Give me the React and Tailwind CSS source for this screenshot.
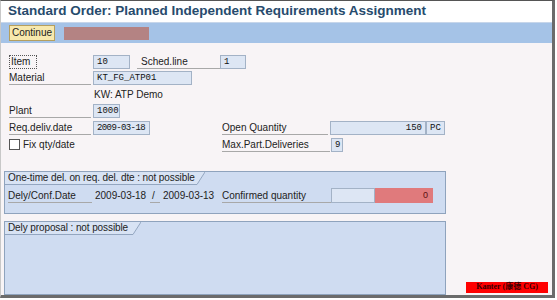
function Field({ w, children, right, className = '' }) {
  return (
    <div
      className={`h-[14px] whitespace-nowrap border border-[#a3b2c6] bg-[#dde6f4] px-[3px] font-['Liberation_Mono',monospace] text-[9px] leading-[12px] text-[#111] ${right ? 'text-right' : ''} ${className}`}
      style={{ width: w }}
    >
      {children}
    </div>
  )
}

function Label({ w, children, className = '' }) {
  return (
    <div
      className={`h-[14px] whitespace-nowrap border-b border-[#a8a8a8] text-[10px] leading-[13px] text-[#222] ${className}`}
      style={{ width: w }}
    >
      {children}
    </div>
  )
}

function GroupBox({ title, tabWidth, className = '', children }) {
  return (
    <div className={`ml-[3px] w-[442px] border border-[#8fa3bd] bg-[#cfdcf1] ${className}`}>
      <div className="flex h-[13px]">
        <div
          className="whitespace-nowrap border-b border-[#93a6c0] bg-[#d8e3f4] pl-[3px] text-[10px] leading-[12px] tracking-[-0.1px] text-[#222]"
          style={{ width: tabWidth }}
        >
          {title}
        </div>
        <svg width="8" height="13" viewBox="0 0 8 13">
          <path d="M0 0 L8 0 L0 13 Z" fill="#d8e3f4" />
          <path d="M8 0 L0 12.5" stroke="#93a6c0" strokeWidth="1" />
        </svg>
      </div>
      {children}
    </div>
  )
}

export default function App() {
  return (
    <div className="relative h-[300px] w-[557px] overflow-hidden bg-white font-['Liberation_Sans',sans-serif]">
      <div className="flex h-[298px] w-[555px] flex-col border-t border-r-[3px] border-b-[3px] border-l border-t-[#555] border-r-[#6b6b6b] border-b-[#6b6b6b] border-l-[#c8c8c8]">
        <div className="flex h-[23px] items-center whitespace-nowrap bg-white pl-[7px] font-['Liberation_Sans',sans-serif] text-[13.5px] font-bold text-[#274b6d]">
          Standard Order: Planned Independent Requirements Assignment
        </div>
        <div className="flex h-[22px] items-center gap-[9px] border-t border-[#c7d6ea] bg-[#a5c3e7] pl-[8px]">
          <div className="flex h-[16px] w-[46px] items-center justify-center border border-[#b59f5e] bg-[#f7e8ad] text-[10px] text-[#222]">
            Continue
          </div>
          <div className="mt-[2px] h-[13px] w-[85px] bg-[#b48383]" />
        </div>
        <div className="relative flex-1 bg-[#f8f4f6] pt-[12px]">
          <div className="flex flex-col gap-[2.5px] pl-[8px]">
            <div className="flex items-center">
              <div className="h-[14px] w-[28px] whitespace-nowrap border border-dotted border-[#555] px-[1px] text-[10px] leading-[12px] text-[#222]">
                Item
              </div>
              <div className="w-[56px]" />
              <Field w={37}>10</Field>
              <div className="w-[7px]" />
              <Label w={83} className="pl-[4px]">Sched.line</Label>
              <Field w={26}>1</Field>
            </div>
            <div className="flex items-center gap-[2px]">
              <Label w={82}>Material</Label>
              <Field w={99}>KT_FG_ATP01</Field>
            </div>
            <div className="flex h-[14px] items-center pl-[85px] text-[10px] text-[#222]">KW: ATP Demo</div>
            <div className="flex items-center gap-[2px]">
              <Label w={82}>Plant</Label>
              <Field w={27}>1000</Field>
            </div>
            <div className="flex items-center gap-[2px]">
              <Label w={82}>Req.deliv.date</Label>
              <Field w={57} className="tracking-[-0.6px]">2009-03-18</Field>
              <div className="w-[68px]" />
              <Label w={106}>Open Quantity</Label>
              <div className="flex">
                <Field w={96} right>150</Field>
                <Field w={19}>PC</Field>
              </div>
            </div>
            <div className="flex items-center">
              <div className="flex w-[213px] items-center gap-[3px] whitespace-nowrap text-[10px] text-[#222]">
                <div className="h-[11px] w-[11px] border border-[#555] bg-white" />
                Fix qty/date
              </div>
              <Label w={108}>Max.Part.Deliveries</Label>
              <div className="w-[1px]" />
              <Field w={12} className="px-[2px]">9</Field>
            </div>
          </div>

          <GroupBox title="One-time del. on req. del. dte : not possible" tabWidth={192} className="mt-[19px] h-[43px]">
            <div className="mt-[3px] flex items-center whitespace-nowrap pl-[3px] text-[10px] text-[#222]">
              <Label w={84}>Dely/Conf.Date</Label>
              <div className="h-[14px] w-[58px] pl-[3px] leading-[13px]">2009-03-18</div>
              <div className="h-[14px] w-[10px] border-b border-[#a8a8a8] pl-[2px] leading-[13px]">/</div>
              <div className="h-[14px] w-[62px] pl-[3px] leading-[13px]">2009-03-13</div>
              <Label w={109}>Confirmed quantity</Label>
              <div className="h-[15px] w-[44px] border border-[#a3b2c6] bg-[#dde6f4]" />
              <div className="h-[15px] w-[58px] bg-[#e07a7c] pr-[5px] text-right text-[9px] leading-[14px] text-[#5a1010]">0</div>
            </div>
          </GroupBox>

          <GroupBox title="Dely proposal : not possible" tabWidth={128} className="mt-[7px] h-[74px]" />

          <div className="absolute left-[465px] top-[239px] flex h-[11px] w-[82px] items-center justify-center whitespace-nowrap bg-[#f00] font-['Liberation_Serif','Noto_Sans_CJK_SC',serif] text-[8px] font-bold leading-none text-[#3a0000]">
            Kanter (康德 CG)
          </div>
        </div>
      </div>
    </div>
  )
}
